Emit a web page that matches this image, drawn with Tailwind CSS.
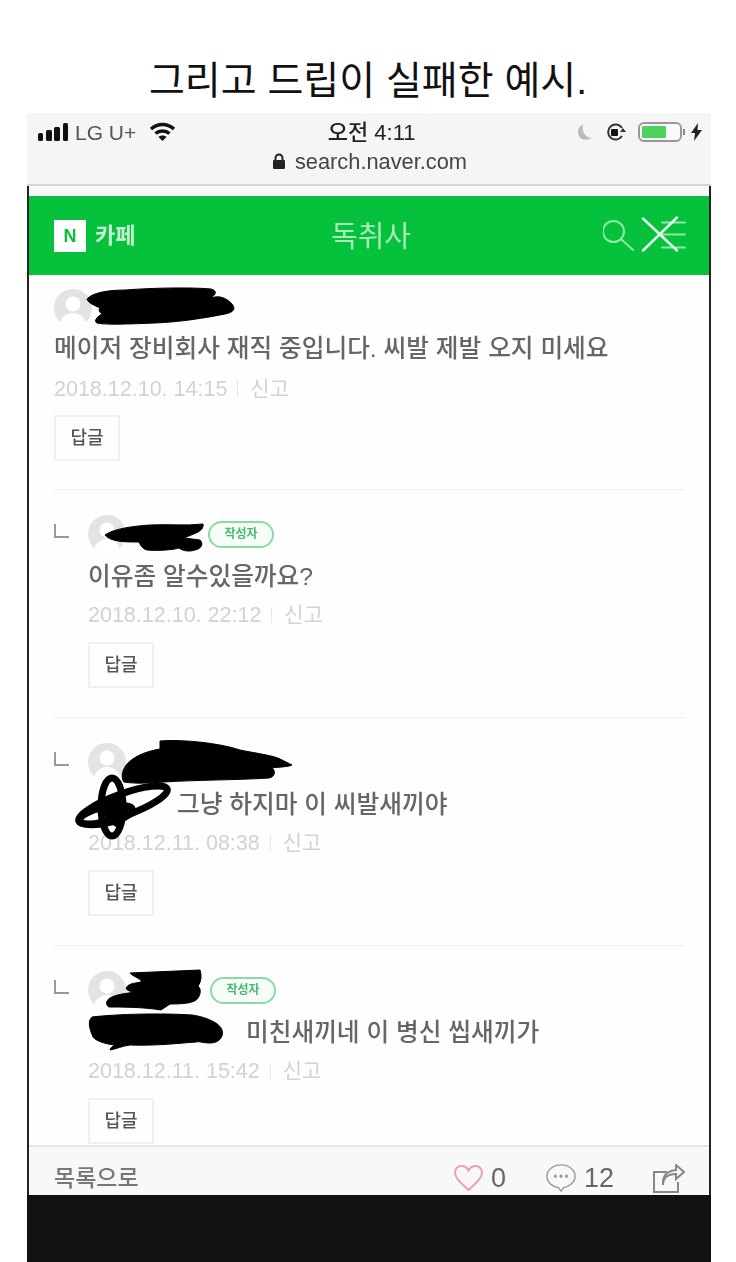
<!DOCTYPE html>
<html lang="ko">
<head>
    <meta charset="UTF-8">
    <meta name="viewport" content="width=device-width, initial-scale=1.0">
    <title>그리고 드립이 실패한 예시.</title>
    <script src="https://cdn.jsdelivr.net/npm/@tailwindcss/browser@4"></script>
</head>
<body class="bg-white font-['Liberation_Sans','Noto_Sans_CJK_KR',sans-serif] w-[736px] h-[1262px] overflow-hidden">
    <!-- Caption -->
    <h1 class="h-[113px] pt-[56px] text-center text-[39px] leading-[50px] text-[#111] font-normal">그리고 드립이 실패한 예시.</h1>

    <!-- Phone capture -->
    <div class="ml-[27px] w-[684px] h-[1149px] flex flex-col blur-[0.7px]">
        <!-- Status bar -->
        <div class="h-[73px] shrink-0 bg-[#f5f5f5] border-b-2 border-[#d8d4d4] relative text-[#222]">
            <div class="h-[38px] pl-[11px] pr-[9px] flex items-center">
                <svg width="31" height="18" viewBox="0 0 31 18" fill="#111"><rect x="0" y="10" width="5" height="8" rx="1.500"/><rect x="8" y="7" width="6" height="11" rx="1.500"/><rect x="16" y="4" width="6" height="14" rx="1.500"/><rect x="25" y="0" width="5" height="18" rx="1.500"/></svg>
                <span class="ml-[6px] text-[21px] leading-none text-[#555]">LG U+</span>
                <svg class="ml-[13px]" width="27" height="20" viewBox="0 0 27 20" fill="none" stroke="#111" stroke-width="3.500"><path d="M2 7c7-6 16-6 23 0"/><path d="M6.500 11.500c4-3.500 10-3.500 14 0"/><path d="M13.500 19l-4-4c2-2 6-2 8 0z" fill="#111" stroke="none"/></svg>
                <span class="flex-1 text-center text-[22px] leading-none font-medium -ml-[10px] pt-[1px]">오전 4:11</span>
                <svg width="16" height="18" viewBox="0 0 16 18" fill="#bbb"><path d="M6 1C1 4 0 9 2 13c2 4 8 5 13 2C9 15 4 9 6 1z"/></svg>
                <svg class="ml-[12px]" width="21" height="20" viewBox="0 0 21 20" fill="none" stroke="#333" stroke-width="2"><path d="M17 6a7.500 7.500 0 1 0 0 8"/><path d="M15 10h6l-3-4z" fill="#333" stroke="none"/><rect x="6" y="7" width="7" height="7" rx="1" fill="#111" stroke="none"/></svg>
                <svg class="ml-[12px]" width="47" height="20" viewBox="0 0 47 20" fill="none"><rect x="1" y="1" width="42" height="18" rx="5" stroke="#999" stroke-width="2" fill="#fafafa"/><rect x="4" y="4" width="24" height="12" rx="1" fill="#4cd35f"/><path d="M46 7v6" stroke="#888" stroke-width="2"/></svg>
                <svg class="ml-[6px]" width="11" height="18" viewBox="0 0 11 18" fill="#222"><path d="M7 0 0 10h4l-1 8 8-11H6.500z"/></svg>
            </div>
            <div class="flex items-center justify-center gap-[9px] text-[21.800px] leading-none text-[#444] pl-[1px]">
                <svg width="14" height="17" viewBox="0 0 14 17"><path d="M3.500 7V5a3.500 3.500 0 0 1 7 0v2" fill="none" stroke="#222" stroke-width="2"/><rect x="1" y="7" width="12" height="9" rx="1" fill="#222"/></svg>
                <span>search.naver.com</span>
            </div>
        </div>

        <!-- Page body -->
        <div class="flex-1 min-h-0 border-x-2 border-[#222] flex flex-col bg-white">
            <div class="h-[10px] shrink-0 bg-[#f8f8f8]"></div>

            <!-- Green header -->
            <header class="h-[79px] shrink-0 bg-[#06c13c] flex items-center pl-[25px] pr-[22px]">
                <div class="w-[32px] h-[32px] bg-white flex items-center justify-center text-[#06c13c] text-[18px] font-bold leading-none">N</div>
                <span class="ml-[9px] w-[43px] text-[22px] font-bold leading-none text-[#c6f1d0]">카페</span>
                <span class="flex-1 text-center text-[29px] leading-none text-[#a9ebb9] pt-[3px] pl-[1px]">독취사</span>
                <svg width="84" height="44" viewBox="0 0 84 44" fill="none" stroke-linecap="round">
                    <circle cx="10.500" cy="17.500" r="10.500" stroke="#8ee9a8" stroke-width="2"/>
                    <path d="M18 25l12 11" stroke="#8ee9a8" stroke-width="2"/>
                    <path d="M59 8.500h23M59 20.500h23M59 33.500h23" stroke="#8ee9a8" stroke-width="2"/>
                    <path d="M40 4.500l34 32M74 3.500 40 36.500" stroke="#e6fcec" stroke-width="2.500"/>
                </svg>
            </header>

            <!-- Comments -->
            <main class="flex-1 min-h-0 overflow-hidden relative px-[25px] pt-[14px] bg-[#fefefe]">
                <!-- Comment 1 -->
                <section class="h-[201px] border-b border-[#eeeeee]">
                    <div class="w-[38px] h-[38px] rounded-full overflow-hidden"><svg width="38" height="38" viewBox="0 0 38 38"><rect width="38" height="38" fill="#e3e3e5"/><circle cx="19" cy="15" r="7.500" fill="#fff"/><ellipse cx="19" cy="36" rx="13" ry="12" fill="#fff"/></svg></div>
                    <p class="mt-[4px] text-[24.700px] font-medium leading-[36px] text-[#666]">메이저 장비회사 재직 중입니다. 씨발 제발 오지 미세요</p>
                    <div class="mt-[10px] text-[21px] leading-[24px] text-[#d2d2d2] flex items-center"><span class="text-[21.500px]">2018.12.10. 14:15</span><span class="ml-[10px] mr-[12px] w-px h-[16px] bg-[#e6e6e6]"></span><span>신고</span></div>
                    <button class="mt-[14px] w-[66px] h-[46px] border-2 border-[#f0f0f0] text-[18px] font-medium text-[#555]">답글</button>
                </section>

                <!-- Comment 2 -->
                <section class="h-[228px] pt-[25px] border-b border-[#eeeeee] flex">
                    <div class="w-[34px] shrink-0 pt-[9px]"><div class="w-[15px] h-[14px] border-l-2 border-b-2 border-[#999]"></div></div>
                    <div class="flex-1">
                        <div class="h-[38px] flex items-center">
                            <div class="w-[38px] h-[38px] rounded-full overflow-hidden"><svg width="38" height="38" viewBox="0 0 38 38"><rect width="38" height="38" fill="#e3e3e5"/><circle cx="19" cy="15" r="7.500" fill="#fff"/><ellipse cx="19" cy="36" rx="13" ry="12" fill="#fff"/></svg></div>
                            <span class="ml-[82px] w-[66px] h-[27px] rounded-full border-2 border-[#8adba2] bg-[#f6fdf8] flex items-center justify-center text-[12px] font-bold text-[#4ab873]">작성자</span>
                        </div>
                        <p class="mt-[6px] text-[24.700px] font-medium leading-[36px] text-[#666]">이유좀 알수있을까요?</p>
                        <div class="mt-[8px] text-[21px] leading-[24px] text-[#d2d2d2] flex items-center"><span class="text-[21.500px]">2018.12.10. 22:12</span><span class="ml-[10px] mr-[12px] w-px h-[16px] bg-[#e6e6e6]"></span><span>신고</span></div>
                        <button class="mt-[15px] w-[66px] h-[46px] border-2 border-[#f0f0f0] text-[18px] font-medium text-[#555]">답글</button>
                    </div>
                </section>

                <!-- Comment 3 -->
                <section class="h-[228px] pt-[25px] border-b border-[#eeeeee] flex">
                    <div class="w-[34px] shrink-0 pt-[9px]"><div class="w-[15px] h-[14px] border-l-2 border-b-2 border-[#999]"></div></div>
                    <div class="flex-1">
                        <div class="h-[38px] flex items-center">
                            <div class="w-[38px] h-[38px] rounded-full overflow-hidden"><svg width="38" height="38" viewBox="0 0 38 38"><rect width="38" height="38" fill="#e3e3e5"/><circle cx="19" cy="15" r="7.500" fill="#fff"/><ellipse cx="19" cy="36" rx="13" ry="12" fill="#fff"/></svg></div>
                        </div>
                        <p class="mt-[6px] ml-[89px] text-[24.700px] font-medium leading-[36px] text-[#666]">그냥 하지마 이 씨발새끼야</p>
                        <div class="mt-[8px] text-[21px] leading-[24px] text-[#d2d2d2] flex items-center"><span class="text-[21.500px]">2018.12.11. 08:38</span><span class="ml-[10px] mr-[12px] w-px h-[16px] bg-[#e6e6e6]"></span><span>신고</span></div>
                        <button class="mt-[15px] w-[66px] h-[46px] border-2 border-[#f0f0f0] text-[18px] font-medium text-[#555]">답글</button>
                    </div>
                </section>

                <!-- Comment 4 -->
                <section class="pt-[25px] flex">
                    <div class="w-[34px] shrink-0 pt-[9px]"><div class="w-[15px] h-[14px] border-l-2 border-b-2 border-[#999]"></div></div>
                    <div class="flex-1">
                        <div class="h-[38px] flex items-center">
                            <div class="w-[38px] h-[38px] rounded-full overflow-hidden"><svg width="38" height="38" viewBox="0 0 38 38"><rect width="38" height="38" fill="#e3e3e5"/><circle cx="19" cy="15" r="7.500" fill="#fff"/><ellipse cx="19" cy="36" rx="13" ry="12" fill="#fff"/></svg></div>
                            <span class="ml-[84px] w-[66px] h-[27px] rounded-full border-2 border-[#8adba2] bg-[#f6fdf8] flex items-center justify-center text-[12px] font-bold text-[#4ab873]">작성자</span>
                        </div>
                        <p class="mt-[6px] ml-[158px] text-[24.700px] font-medium leading-[36px] text-[#666]">미친새끼네 이 병신 씹새끼가</p>
                        <div class="mt-[8px] text-[21px] leading-[24px] text-[#d2d2d2] flex items-center"><span class="text-[21.500px]">2018.12.11. 15:42</span><span class="ml-[10px] mr-[12px] w-px h-[16px] bg-[#e6e6e6]"></span><span>신고</span></div>
                        <button class="mt-[15px] w-[66px] h-[46px] border-2 border-[#f0f0f0] text-[18px] font-medium text-[#555]">답글</button>
                    </div>
                </section>

                <!-- Marker scribbles over the names, drawn in page coordinates -->
                <svg class="absolute left-0 top-0 w-[680px] h-[870px]" viewBox="29 275 680 870" fill="#000" stroke="#000">
                    <path stroke-width="1" d="M87 299c5-6 20-9 38-9 25-2 65-3 86-1 8 2 3 7 0 9 8-3 15 0 20 5 5 5 4 9-6 11-20 4-45 8-70 9-25 1-50 2-58 0-4-2 1-7 5-9-4-3-3-5-2-6-6-3-12-5-13-9z"/>
                    <path stroke-width="1" d="M105 535c8-6 28-9 45-10 18-1 35 1 53-1 1 3-2 7-7 9-4 2-8 3-12 5l16 2c4 4 1 9-5 10-6 2-12 1-16-2-6 2-22 3-32 2-5-1-7-6-8-8-14 0-28 0-34-7z"/>
                    <path stroke-width="1" d="M160 741c20-2 60 2 80 9 15 3 35 6 40 9l12 6c-4 2-14 2-20 3 4 3 3 9-3 10-30 2-75 2-105 4-15 1-28 2-40 0-4-5-1-14 4-19 8-8 20-12 32-14 0-4 0-7 0-8z"/>
                    <g fill="none" stroke-width="7">
                        <ellipse cx="112" cy="807" rx="11" ry="29"/>
                        <ellipse cx="123" cy="805" rx="47" ry="11" transform="rotate(-20 123 805)"/>
                        <ellipse cx="106" cy="815" rx="27" ry="8" transform="rotate(-12 106 815)"/>
                    </g>
                    <path stroke-width="2" d="M101 797l22 3 6 14-10 14-12-8z"/>
                    <path stroke-width="1" d="M130 973l70-3c2 6 1 12-2 16 3 3 3 7 0 12-3 5-14 6-28 6l-9 6c-18-3-40-3-52-3-4-2-3-8 3-10 6-3 18-4 22-5-8-1-10-4-5-7 3-2 8-2 12-3 2-3-8-5-11-9z"/>
                    <path stroke-width="1" d="M92 1017c25-3 70-4 100-2 14 2 28 8 30 15 2 7-3 13-12 13-8 0-10-2-14-1-15 1-40 4-66 3-8 1-14 4-20 5 0-2 4-5 5-5-10-1-19-4-22-8-3-7-6-16-1-20z"/>
                </svg>
            </main>

            <!-- Bottom bar -->
            <footer class="h-[50px] shrink-0 bg-[#f8f8f9] border-t-2 border-[#e4e4e4] pt-[14px] flex items-center pl-[25px] pr-[24px] relative z-10">
                <span class="text-[23px] font-medium leading-none text-[#777]">목록으로</span>
                <svg class="ml-auto" width="31" height="28" viewBox="0 0 31 28" fill="none" stroke="#e8a0b2" stroke-width="2"><path d="M15.500 26C8 19 2 14.500 2 8.500 2 4.500 5 2 8.500 2c3 0 5.500 1.500 7 4.500C17 3.500 19.500 2 22.500 2 26 2 29 4.500 29 8.500c0 6-6 10.500-13.500 17.500z"/></svg>
                <span class="ml-[7px] text-[27px] font-medium leading-none text-[#666]">0</span>
                <svg class="ml-[38px]" width="34" height="30" viewBox="0 0 34 32" fill="none" stroke="#999" stroke-width="1.500"><path d="M17 2C8.500 2 2 7.500 2 14s6.500 12 12 12l3 4 3-4c6-.5 12-5.500 12-12S25.500 2 17 2z"/><circle cx="11" cy="14" r="1" fill="#888"/><circle cx="17" cy="14" r="1" fill="#888"/><circle cx="23" cy="14" r="1" fill="#888"/></svg>
                <span class="ml-[6px] text-[27px] font-medium leading-none text-[#666]">12</span>
                <svg class="ml-[39px]" width="32" height="29" viewBox="0 0 32 29" fill="none" stroke="#888" stroke-width="2"><path d="M14 8H1v20h24V18"/><path d="M10 21c0-7 5-11 13-11V15l8-7-8-7v5C15 7 9 11 10 21z"/></svg>
            </footer>
        </div>

        <!-- Below the page -->
        <div class="h-[67px] shrink-0 bg-[#111]"></div>
    </div>
</body>
</html>
